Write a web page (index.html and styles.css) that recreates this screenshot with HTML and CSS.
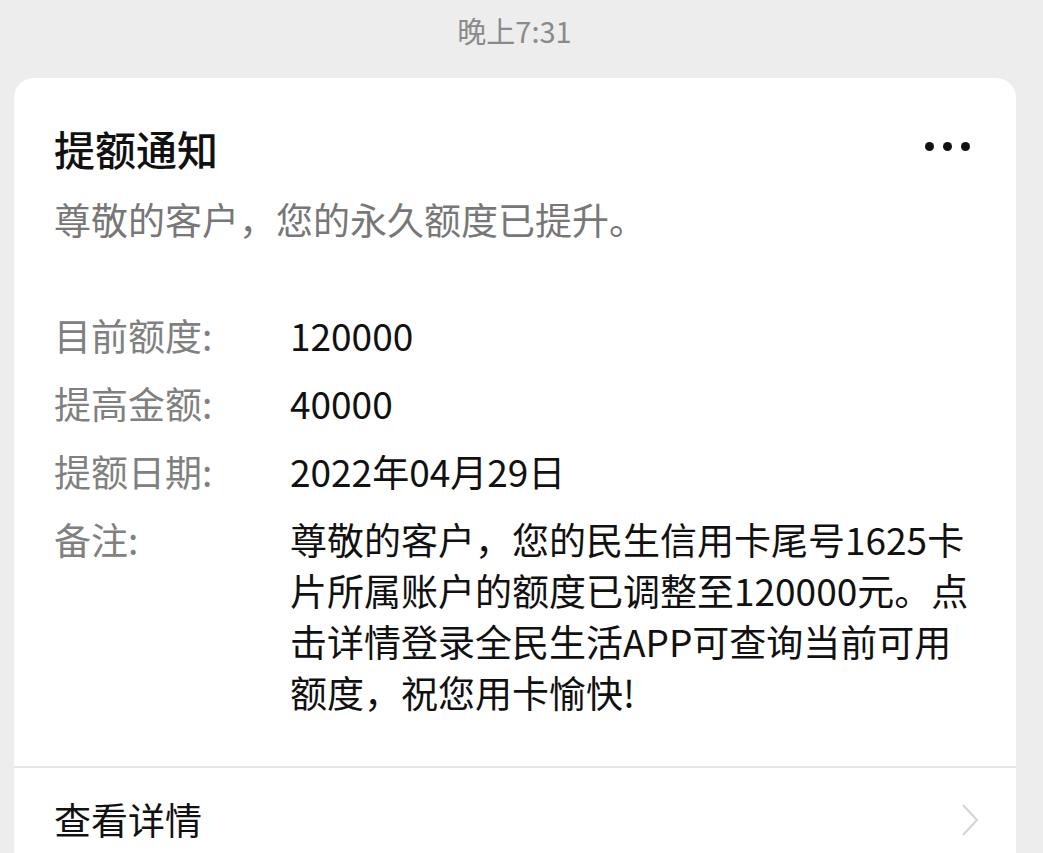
FILE: index.html
```html
<!DOCTYPE html>
<html lang="zh-CN">
<head>
    <meta charset="UTF-8">
    <meta name="viewport" content="width=device-width, initial-scale=1.0">
    <title>提额通知</title>
    <link rel="stylesheet" href="styles.css">
</head>
<body>
    <div class="time">晚上7:31</div>
    <div class="card">
        <div class="card-head">
            <h1 class="title">提额通知</h1>
            <span class="more"><i></i><i></i><i></i></span>
        </div>
        <p class="subtitle">尊敬的客户，您的永久额度已提升。</p>
        <div class="info">
            <div class="info-row">
                <span class="label">目前额度:</span>
                <span class="value">120000</span>
            </div>
            <div class="info-row">
                <span class="label">提高金额:</span>
                <span class="value">40000</span>
            </div>
            <div class="info-row">
                <span class="label">提额日期:</span>
                <span class="value">2022年04月29日</span>
            </div>
            <div class="info-row">
                <span class="label">备注:</span>
                <span class="value">尊敬的客户，您的民生信用卡尾号1625卡片所属账户的额度已调整至120000元。点击详情登录全民生活APP可查询当前可用额度，祝您用卡愉快!</span>
            </div>
        </div>
        <div class="footer">
            <span>查看详情</span>
            <svg class="chevron" width="20" height="34" viewBox="0 0 20 34">
                <path d="M3 2 L17 17 L3 32" fill="none" stroke="#d4d4d4" stroke-width="2"/>
            </svg>
        </div>
    </div>
</body>
</html>
```

FILE: styles.css
```css
:root {
    --bg: #ededed;
    --card: #ffffff;
    --text: #111111;
    --muted: #808080;
    --line: #e6e6e6;
}
body {
    margin: 0;
    background-color: var(--bg);
    font-family: "Noto Sans CJK SC", "Noto Sans", sans-serif;
    color: var(--text);
}
.time {
    text-align: center;
    font-size: 29px;
    line-height: 40px;
    padding: 10px 14px 0 0;
    color: #8a8a8a;
    height: 68px;
    box-sizing: border-box;
    margin-bottom: 10px;
}
.card {
    margin: 0 27px 0 14px;
    background-color: var(--card);
    border-radius: 20px 20px 0 0;
    padding-top: 44px;
}
.card-head {
    display: flex;
    justify-content: space-between;
    align-items: center;
    padding: 0 46px 0 40px;
}
.title {
    margin: 0;
    font-size: 41px;
    font-weight: 500;
    line-height: 52px;
}
.more {
    display: flex;
    gap: 9px;
    margin-top: -4px;
}
.more i {
    width: 9px;
    height: 9px;
    border-radius: 50%;
    background-color: #111;
}
.subtitle {
    margin: 20px 40px 0;
    font-size: 37px;
    line-height: 51px;
    color: #777;
}
.info {
    display: flex;
    flex-direction: column;
    gap: 17px;
    padding: 65px 40px 48px;
}
.info-row {
    display: flex;
    font-size: 37px;
    line-height: 51px;
}
.label {
    width: 236px;
    flex-shrink: 0;
    color: var(--muted);
}
.value {
    flex: 1;
    color: var(--text);
}
.footer {
    display: flex;
    justify-content: space-between;
    align-items: center;
    border-top: 2px solid var(--line);
    padding: 26px 36px 20px 40px;
    font-size: 37px;
    line-height: 51px;
}
.chevron {
    display: block;
}
```
